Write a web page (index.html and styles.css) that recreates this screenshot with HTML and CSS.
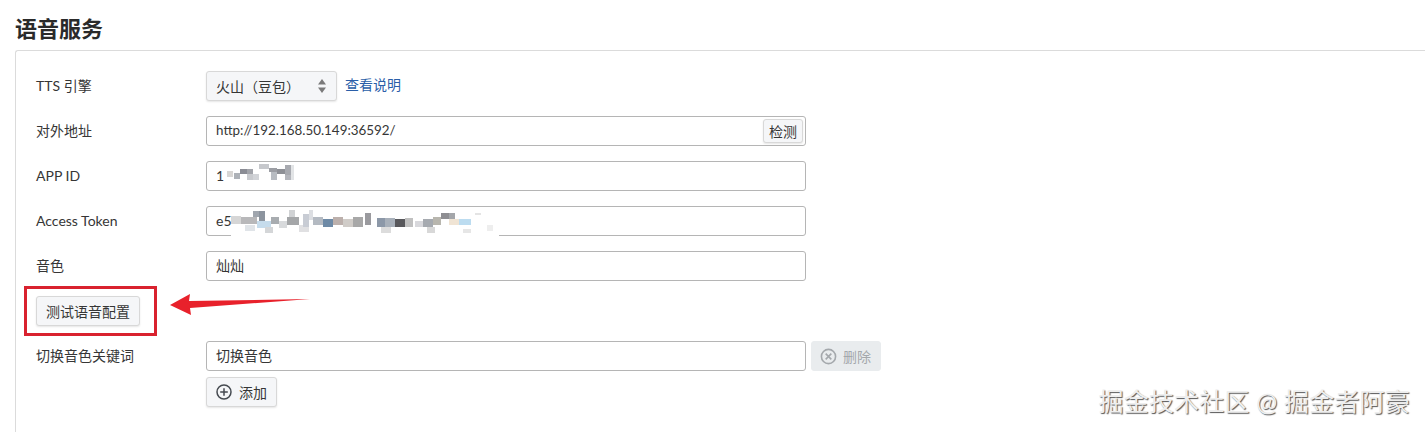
FILE: index.html
```html
<!DOCTYPE html>
<html lang="zh-CN">
<head>
    <meta charset="UTF-8">
    <title>语音服务</title>
    <link rel="stylesheet" href="styles.css">
</head>
<body>
    <h2 class="section-title">语音服务</h2>

    <div class="panel">
        <!-- TTS engine -->
        <div class="row">
            <label class="row-label">TTS 引擎</label>
            <div class="select-box">
                <span>火山（豆包）</span>
                <svg class="select-arrows" width="10" height="16" viewBox="0 0 10 16"><path d="M5 1l4 5.500H1z"/><path d="M5 15l4-5.500H1z"/></svg>
            </div>
            <a class="help-link">查看说明</a>
        </div>

        <div class="row">
            <label class="row-label">对外地址</label>
            <div class="input-box">
                <span class="url-text">http://192.168.50.149:36592/</span>
                <button class="btn btn-inner">检测</button>
            </div>
        </div>

        <div class="row">
            <label class="row-label">APP ID</label>
            <div class="input-box">
                <span>1</span>
                <svg class="mosaic mosaic-id" width="74" height="32" viewBox="0 0 74 32" shape-rendering="crispEdges">
                    <rect x="0" y="8" width="74" height="19" fill="#fff"/>
                    <rect x="2" y="11" width="6" height="6" fill="#d8d6d4"/>
                    <rect x="9" y="13" width="6" height="6" fill="#aeb2b8"/>
                    <rect x="15" y="9" width="7" height="5" fill="#8a8c94"/>
                    <rect x="22" y="9" width="6" height="5" fill="#a2a4aa"/>
                    <rect x="22" y="14" width="6" height="6" fill="#c8cace"/>
                    <rect x="28" y="14" width="6" height="6" fill="#d2d4d8"/>
                    <rect x="34" y="4" width="10" height="5" fill="#c6c8cc"/>
                    <rect x="44" y="8" width="8" height="4" fill="#9c9ea4"/>
                    <rect x="46" y="12" width="6" height="8" fill="#b8bcc2"/>
                    <rect x="52" y="9" width="8" height="5" fill="#8e9096"/>
                    <rect x="60" y="5" width="6" height="10" fill="#a8aab0"/>
                    <rect x="60" y="15" width="6" height="5" fill="#b4b6bc"/>
                    <rect x="66" y="5" width="3" height="15" fill="#e2e4e6"/>
                </svg>
            </div>
        </div>

        <div class="row">
            <label class="row-label">Access Token</label>
            <div class="input-box">
                <span>e5</span>
                <svg class="mosaic mosaic-token" width="268" height="32" viewBox="0 0 268 32" shape-rendering="crispEdges">
                    <rect x="0" y="5" width="268" height="27" fill="#fff"/>
                    <rect x="0" y="11" width="10" height="8" fill="#d6d6d6"/>
                    <rect x="10" y="12" width="16" height="7" fill="#b8b8ba"/>
                    <rect x="22" y="6" width="8" height="6" fill="#a0a6ae"/>
                    <rect x="28" y="6" width="6" height="10" fill="#8c949e"/>
                    <rect x="26" y="16" width="14" height="7" fill="#c6dcec"/>
                    <rect x="40" y="12" width="8" height="7" fill="#a8acb0"/>
                    <rect x="14" y="20" width="10" height="6" fill="#e0e4e8"/>
                    <rect x="34" y="22" width="8" height="6" fill="#d4d6d8"/>
                    <rect x="48" y="16" width="8" height="7" fill="#d8dadc"/>
                    <rect x="56" y="12" width="12" height="8" fill="#a4a6a8"/>
                    <rect x="58" y="5" width="6" height="7" fill="#d0d2d4"/>
                    <rect x="68" y="20" width="10" height="7" fill="#e0e0e2"/>
                    <rect x="72" y="9" width="6" height="13" fill="#c8ccd4"/>
                    <rect x="78" y="5" width="4" height="10" fill="#dcdee2"/>
                    <rect x="82" y="12" width="10" height="8" fill="#b4bac2"/>
                    <rect x="92" y="14" width="10" height="8" fill="#6e8aa6"/>
                    <rect x="102" y="12" width="10" height="8" fill="#bcb0ac"/>
                    <rect x="112" y="14" width="10" height="8" fill="#d0ccc8"/>
                    <rect x="122" y="12" width="10" height="10" fill="#a8a8a8"/>
                    <rect x="134" y="8" width="6" height="12" fill="#9a9a9e"/>
                    <rect x="146" y="13" width="8" height="9" fill="#8c98a8"/>
                    <rect x="154" y="13" width="10" height="9" fill="#a8b0ba"/>
                    <rect x="164" y="14" width="10" height="8" fill="#58585c"/>
                    <rect x="174" y="13" width="8" height="9" fill="#c0c0c0"/>
                    <rect x="184" y="16" width="8" height="6" fill="#d8d8dc"/>
                    <rect x="192" y="14" width="10" height="8" fill="#a6aab0"/>
                    <rect x="202" y="12" width="8" height="8" fill="#b8b6ae"/>
                    <rect x="210" y="8" width="8" height="6" fill="#8e8e92"/>
                    <rect x="218" y="8" width="6" height="6" fill="#a4a6aa"/>
                    <rect x="218" y="14" width="10" height="6" fill="#f0e4d4"/>
                    <rect x="228" y="14" width="12" height="6" fill="#bcdcf0"/>
                    <rect x="150" y="22" width="10" height="6" fill="#dcdcdc"/>
                    <rect x="196" y="22" width="8" height="6" fill="#d8d8d8"/>
                    <rect x="244" y="8" width="6" height="2" fill="#e4e4e4"/>
                    <rect x="256" y="20" width="6" height="6" fill="#eeeeee"/>
                    <rect x="232" y="24" width="8" height="4" fill="#e6e6e6"/>
                </svg>
            </div>
        </div>

        <div class="row">
            <label class="row-label">音色</label>
            <div class="input-box"><span>灿灿</span></div>
        </div>

        <div class="test-row">
            <button class="btn">测试语音配置</button>
        </div>

        <div class="row row-keyword">
            <label class="row-label">切换音色关键词</label>
            <div class="input-box"><span>切换音色</span></div>
            <button class="btn btn-disabled">
                <svg width="17" height="17" viewBox="0 0 18 18" fill="none" stroke="#a4a8ac" stroke-width="1.700"><circle cx="9" cy="9" r="7.500"/><path d="M6 6l6 6M12 6l-6 6"/></svg>
                <span>删除</span>
            </button>
        </div>

        <div class="row row-add">
            <button class="btn btn-add">
                <svg width="16" height="16" viewBox="0 0 16 16" fill="none" stroke="#454a50" stroke-width="1.500"><circle cx="8" cy="8" r="7"/><path d="M8 4.200v7.600M4.200 8h7.600"/></svg>
                <span>添加</span>
            </button>
        </div>
    </div>

    <!-- annotation drawn over the screenshot -->
    <div class="red-box"></div>
    <svg class="red-arrow" width="142" height="24" viewBox="0 0 142 24"><path d="M1 13L21 2l-1 7L141 7 21 16l1 7z" fill="#e8212b"/></svg>
    <div class="watermark">掘金技术社区 @ 掘金者阿豪</div>
</body>
</html>
```

FILE: styles.css
```css
* {
    margin: 0;
    padding: 0;
    box-sizing: border-box;
}

body {
    font-family: 'Lato', 'Noto Sans CJK SC', sans-serif;
    font-size: 14px;
    background: white;
    color: #363636;
    height: 432px;
    overflow: hidden;
    position: relative;
}

.section-title {
    font-size: 22px;
    font-weight: 700;
    line-height: 30px;
    color: #2a2a2a;
    padding: 14px 0 0 15px;
    height: 50px;
}

.panel {
    margin-left: 15px;
    height: 382px;
    border: 1px solid #dbdbdb;
    border-right: none;
    border-bottom: none;
    border-top-left-radius: 3px;
    padding: 20px 0 0 20px;
}

/* Form rows */
.row {
    display: flex;
    align-items: center;
    height: 30px;
    margin-bottom: 15px;
}

.row-label {
    width: 170px;
    flex-shrink: 0;
    margin-top: -2px;
}

.select-box {
    width: 131px;
    height: 30px;
    display: flex;
    align-items: center;
    justify-content: space-between;
    padding: 0 9px 0 9px;
    background: #f5f6f8;
    border: 1px solid #d8d8d8;
    border-radius: 3px;
    box-shadow: 0 1px 2px rgba(0, 0, 0, 0.1);
}

.select-arrows {
    fill: #7a7a7a;
}

.help-link {
    color: #2a5ea8;
    margin: -4px 0 0 8px;
}

.input-box {
    position: relative;
    width: 600px;
    height: 30px;
    display: flex;
    align-items: center;
    justify-content: space-between;
    padding: 0 2px 0 9px;
    border: 1px solid #b5b5b5;
    border-radius: 3px;
    background: white;
}

.input-box > span {
    margin-top: -2px;
}

.input-box > .url-text {
    font-size: 13.400px;
}

.mosaic {
    position: absolute;
    top: -2px;
    left: 18px;
}

.mosaic-token {
    left: 24px;
}

/* Buttons */
.btn {
    font-family: inherit;
    font-size: 14px;
    color: #363636;
    height: 30px;
    padding: 0 9px;
    background: #f5f6f8;
    border: 1px solid #d8d8d8;
    border-radius: 3px;
    box-shadow: 0 1px 2px rgba(0, 0, 0, 0.1);
    display: inline-flex;
    align-items: center;
    gap: 7px;
}

.btn-inner {
    height: 24px;
    padding: 0 5px;
}

.test-row {
    height: 30px;
    margin-bottom: 15px;
}

.btn-disabled {
    width: 70px;
    margin-left: 5px;
    background: #e9ecee;
    border-color: #e9ecee;
    box-shadow: none;
    color: #a4a8ac;
    padding: 0 0 0 8px;
    gap: 6px;
}

.row-keyword {
    margin-bottom: 6px;
}

.row-add {
    padding-left: 170px;
}

.btn-add {
    width: 71px;
}

/* Annotation */
.red-box {
    position: absolute;
    left: 24px;
    top: 286px;
    width: 133px;
    height: 50px;
    border: 3px solid #d9222f;
}

.red-arrow {
    position: absolute;
    left: 169px;
    top: 292px;
}

.watermark {
    position: absolute;
    right: 15px;
    top: 385px;
    font-size: 25px;
    letter-spacing: 0.200px;
    line-height: 32px;
    color: #eeeeee;
    text-shadow: 1px 1px 1px #555;
    white-space: pre;
}
```
